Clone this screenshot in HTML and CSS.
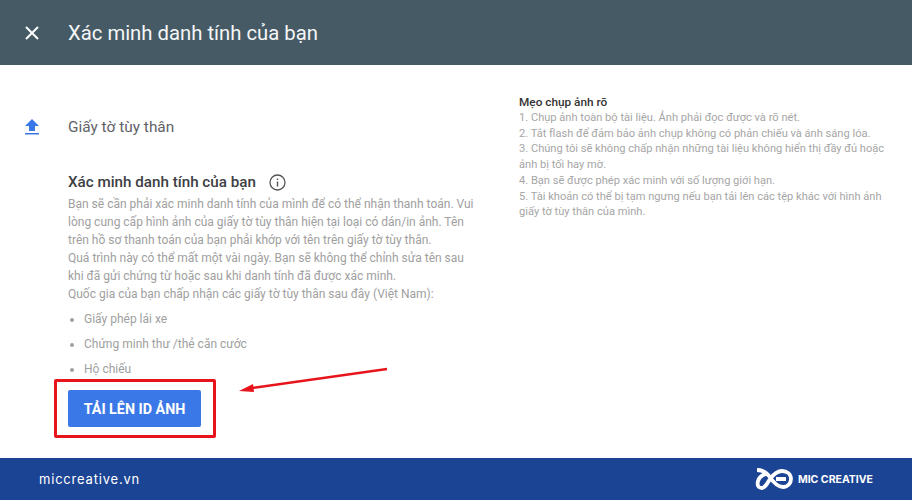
FILE: index.html
```html
<!DOCTYPE html>
<html>
<head>
  <title>Xác minh danh tính của bạn</title>
  <link rel="stylesheet" href="styles.css">
</head>
<body>
  <header class="topbar">
    <svg class="close-icon" width="16" height="16" viewBox="0 0 16 16"><path d="M2 2 L14 14 M14 2 L2 14" stroke="#fff" stroke-width="2" fill="none"/></svg>
    <h1>Xác minh danh tính của bạn</h1>
  </header>

  <main class="content">
    <section class="left">
      <div class="step">
        <svg class="upload-icon" width="16" height="18" viewBox="0 0 16 18"><path d="M8 1 L15 8 H11 V13 H5 V8 H1 Z M1 15 H15 V16.5 H1 Z" fill="#3b78e7"/></svg>
        <span>Giấy tờ tùy thân</span>
      </div>
      <div class="details">
        <h2>Xác minh danh tính của bạn
          <svg class="info-icon" width="17" height="17" viewBox="0 0 17 17"><circle cx="8.5" cy="8.5" r="7.5" stroke="#555" stroke-width="1.3" fill="none"/><path d="M8.5 7.5 V12.5 M8.5 4.5 V6" stroke="#555" stroke-width="1.4"/></svg>
        </h2>
        <p>Bạn sẽ cần phải xác minh danh tính của mình để có thể nhận thanh toán. Vui<br>
        lòng cung cấp hình ảnh của giấy tờ tùy thân hiện tại loại có dán/in ảnh. Tên<br>
        trên hồ sơ thanh toán của bạn phải khớp với tên trên giấy tờ tùy thân.<br>
        Quá trình này có thể mất một vài ngày. Bạn sẽ không thể chỉnh sửa tên sau<br>
        khi đã gửi chứng từ hoặc sau khi danh tính đã được xác minh.<br>
        Quốc gia của bạn chấp nhận các giấy tờ tùy thân sau đây (Việt Nam):</p>
        <ul>
          <li>Giấy phép lái xe</li>
          <li>Chứng minh thư /thẻ căn cước</li>
          <li>Hộ chiếu</li>
        </ul>
        <div class="highlight">
          <button type="button">TẢI LÊN ID ẢNH</button>
        </div>
      </div>
    </section>

    <aside class="tips">
      <h3>Mẹo chụp ảnh rõ</h3>
      <p>1. Chụp ảnh toàn bộ tài liệu. Ảnh phải đọc được và rõ nét.<br>
      2. Tắt flash để đảm bảo ảnh chụp không có phản chiếu và ánh sáng lóa.<br>
      3. Chúng tôi sẽ không chấp nhận những tài liệu không hiển thị đầy đủ hoặc<br>
      ảnh bị tối hay mờ.<br>
      4. Bạn sẽ được phép xác minh với số lượng giới hạn.<br>
      5. Tài khoản có thể bị tạm ngưng nếu bạn tải lên các tệp khác với hình ảnh<br>
      giấy tờ tùy thân của mình.</p>
    </aside>

    <svg class="arrow" width="152" height="28" viewBox="0 0 152 28"><path d="M149 2 L14 21" stroke="#e8141c" stroke-width="2.4" fill="none"/><path d="M1 24 L15 17 L16 25 Z" fill="#e8141c"/></svg>
  </main>

  <footer class="bottombar">
    <span class="site">miccreative.vn</span>
    <div class="brand">
      <svg width="38" height="22" viewBox="0 0 38 22"><path d="M2 2 C8 2 11 4 14 8 C18 14 22 19 28 19 C33 19 36 15 36 11 C36 6 32 3 27 3 C22 3 18 7 15 11 C12 16 10 20 7 20 C3 20 2 17 3 13 C4 10 7 7 11 6 M21 11 H31" stroke="#fff" stroke-width="3.8" fill="none"/></svg>
      <span>MIC CREATIVE</span>
    </div>
  </footer>
</body>
</html>
```

FILE: styles.css
```css
body {
  margin: 0;
  height: 500px;
  overflow: hidden;
  display: flex;
  flex-direction: column;
  background-color: #fff;
  font-family: Roboto, "Liberation Sans", sans-serif;
}

.topbar {
  height: 65px;
  flex-shrink: 0;
  display: flex;
  align-items: center;
  background-color: #465a65;
  padding-left: 24px;
  box-sizing: border-box;
}

.topbar h1 {
  margin: 0 0 0 28px;
  font-size: 20.3px;
  font-weight: 400;
  color: #f4f6f7;
}

.content {
  flex: 1;
  position: relative;
  display: flex;
  min-height: 0;
}

.left {
  width: 519px;
  padding: 51px 0 0 24px;
  box-sizing: border-box;
}

.step {
  display: flex;
  align-items: center;
  gap: 28px;
  font-size: 15.4px;
  color: #5f6368;
  line-height: 22px;
}

.details {
  margin: 33px 0 0 44px;
}

.details h2 {
  margin: 0;
  display: flex;
  align-items: center;
  gap: 13px;
  font-size: 15.2px;
  font-weight: 500;
  color: #3c4043;
  line-height: 22px;
}

.details p {
  margin: 2px 0 0;
  font-size: 12px;
  line-height: 18px;
  color: #a0a0a0;
  white-space: nowrap;
}

.details ul {
  margin: 4px 0 0;
  padding: 0 0 0 16px;
  font-size: 12px;
  color: #a0a0a0;
}

.details li {
  line-height: 25px;
}

.highlight {
  display: inline-block;
  margin: -3px 0 0 -14px;
  padding: 8px 12px 8px 11px;
  border: 3px solid #e8141c;
  border-radius: 2px;
}

button {
  display: block;
  width: 133px;
  height: 37px;
  border: none;
  border-radius: 2px;
  background-color: #3b78e7;
  color: #fff;
  font-family: Roboto, sans-serif;
  font-size: 14.3px;
  font-weight: 700;
  padding: 0;
}

.tips {
  padding-top: 29px;
}

.tips h3 {
  margin: 0;
  font-size: 11.8px;
  font-weight: 500;
  line-height: 16px;
  color: #333;
}

.tips p {
  margin: 0;
  font-size: 11.1px;
  line-height: 15.7px;
  color: #a6a6a6;
  white-space: nowrap;
}

.arrow {
  position: absolute;
  left: 238px;
  top: 302px;
}

.bottombar {
  height: 42px;
  flex-shrink: 0;
  display: flex;
  align-items: center;
  justify-content: space-between;
  padding: 0 39px;
  background-color: #1c4494;
  color: #fff;
}

.site {
  font-family: Inter, sans-serif;
  font-size: 13px;
  letter-spacing: 0.8px;
}

.brand {
  display: flex;
  align-items: center;
  gap: 5px;
  font-family: Inter, sans-serif;
  font-size: 10.5px;
  font-weight: 700;
}
```
